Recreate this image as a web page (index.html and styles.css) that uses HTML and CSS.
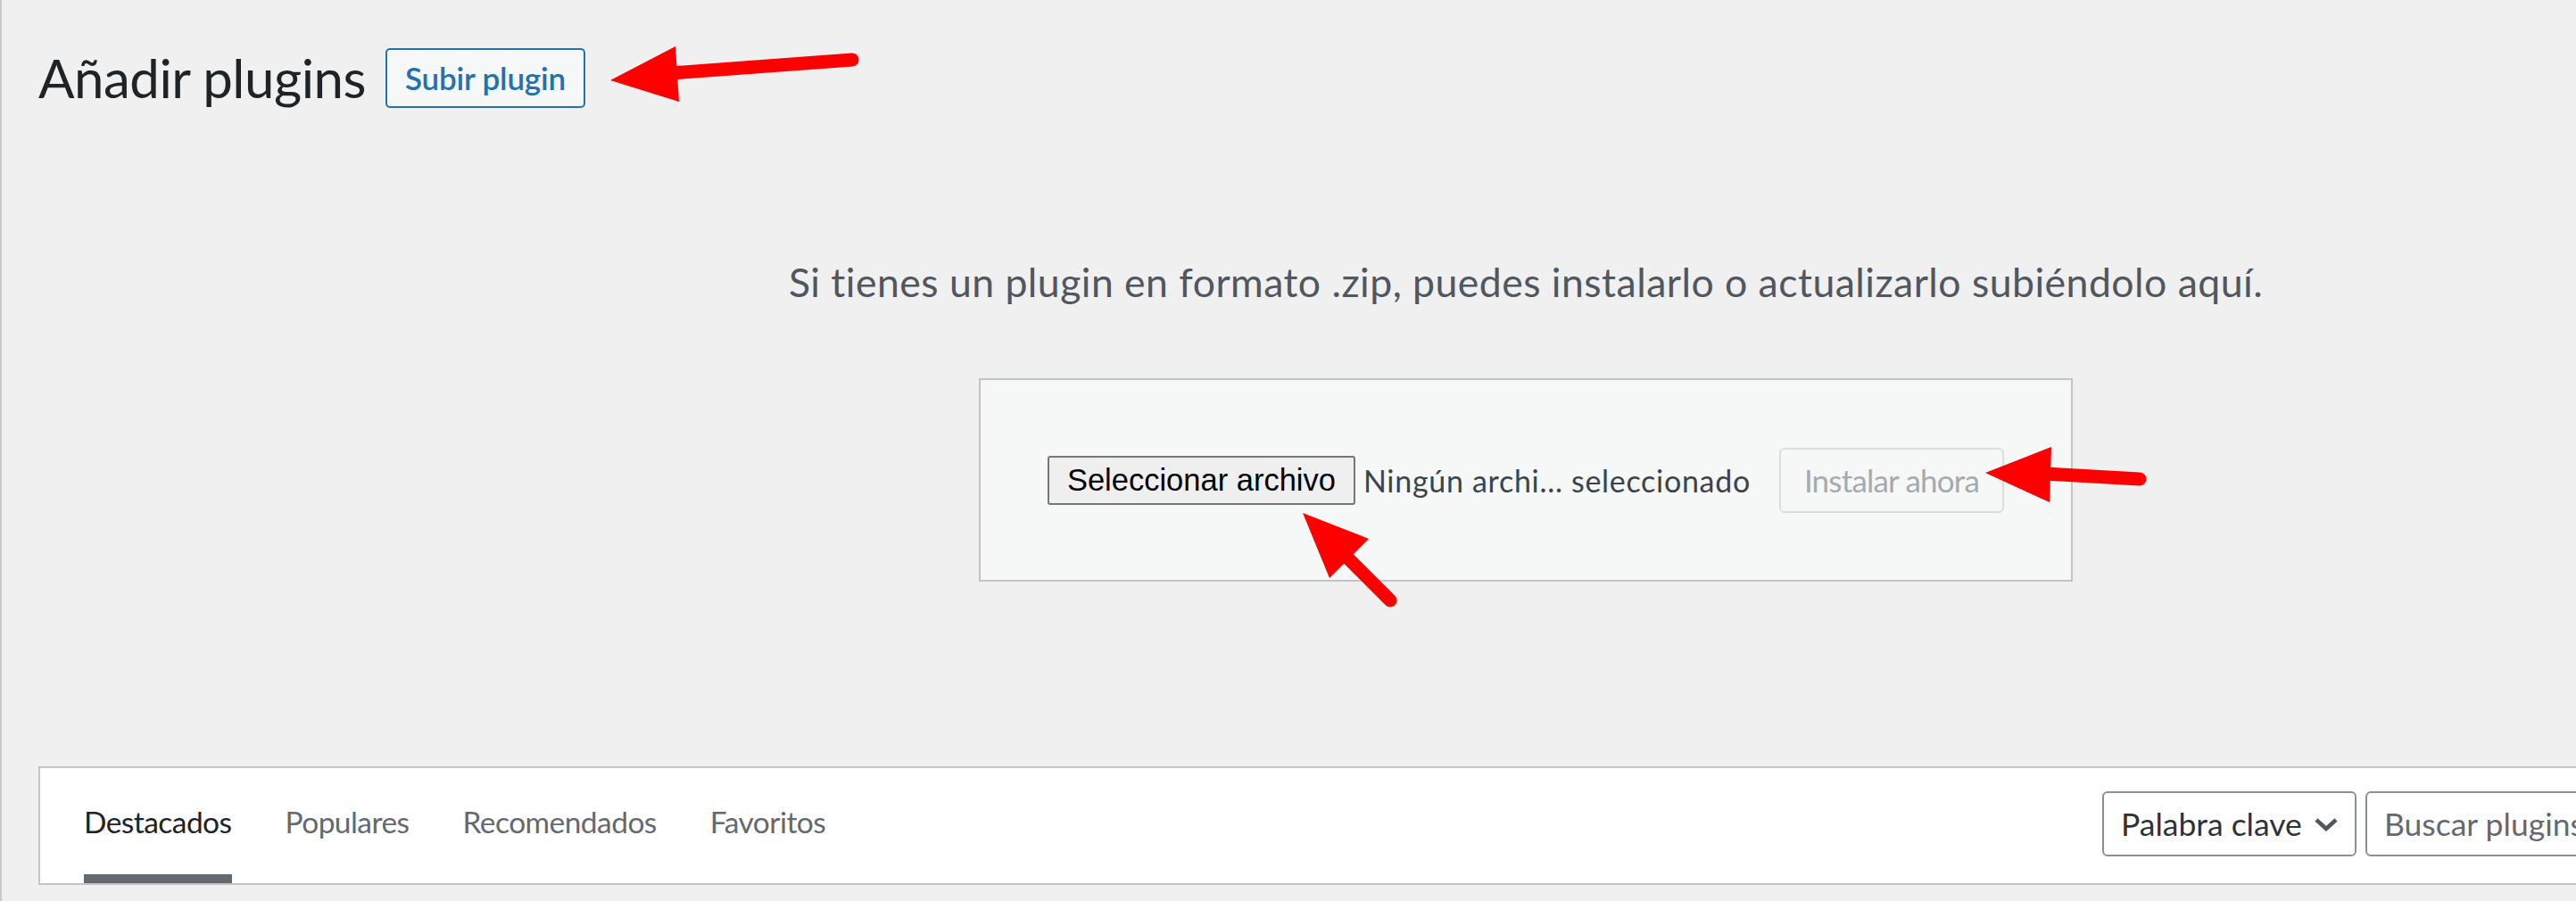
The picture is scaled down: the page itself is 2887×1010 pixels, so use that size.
FILE: index.html
```html
<!DOCTYPE html>
<html lang="es">
<head>
    <meta charset="UTF-8" />
    <meta name="viewport" content="width=device-width, initial-scale=1.0" />
    <title>Añadir plugins</title>
    <link rel="stylesheet" href="styles.css">
</head>
<body>
    <div class="wrap">
        <div class="page-header">
            <h1>Añadir plugins</h1>
            <button class="title-action">Subir plugin</button>
        </div>

        <div class="upload-plugin">
            <p class="install-help">Si tienes un plugin en formato .zip, puedes instalarlo o actualizarlo subiéndolo aquí.</p>
            <form class="upload-form">
                <button type="button" class="file-btn">Seleccionar archivo</button>
                <span class="file-name">Ningún archi... seleccionado</span>
                <button type="button" class="install-btn" disabled>Instalar ahora</button>
            </form>
        </div>

        <div class="filter-bar">
            <ul class="filter-links">
                <li><a href="#" class="current">Destacados</a></li>
                <li><a href="#">Populares</a></li>
                <li><a href="#">Recomendados</a></li>
                <li><a href="#">Favoritos</a></li>
            </ul>
            <div class="search-form">
                <div class="search-type">
                    <span>Palabra clave</span>
                    <svg class="chevron" width="28" height="16" viewBox="0 0 28 16">
                        <polyline points="3,3 14,13 25,3" fill="none" stroke="#50575e" stroke-width="4.5" />
                    </svg>
                </div>
                <input class="search-input" type="search" placeholder="Buscar plugins...">
            </div>
        </div>
    </div>

    <!-- annotation arrows -->
    <svg class="arrows" width="2887" height="1010" viewBox="0 0 2887 1010">
        <g fill="#ff0000" stroke="#ff0000" stroke-linecap="round">
            <line x1="750" y1="82" x2="953" y2="67" stroke-width="15" />
            <polygon points="682,90 755,52 759,114" stroke="none" />

            <line x1="1505" y1="622" x2="1556" y2="673" stroke-width="15" />
            <polygon points="1458,575 1532,604 1488,648" stroke="none" />

            <line x1="2290" y1="531" x2="2396" y2="537" stroke-width="15" />
            <polygon points="2223,530 2297,501 2295,563" stroke="none" />
        </g>
    </svg>
</body>
</html>
```

FILE: styles.css
```css
html,
body {
    overflow: hidden;
}

body {
    margin: 0;
    height: 1010px;
    position: relative;
    background: #f0f0f1;
    border-left: 2px solid #c8c9cc;
    font-family: "Lato", "Segoe UI", sans-serif;
    color: #1d2327;
}

.wrap {
    width: 3334px;
    margin-left: 41px;
}

.page-header {
    display: flex;
    align-items: center;
    gap: 22px;
    margin-top: 51px;
}

h1 {
    margin: 0;
    font-size: 60px;
    font-weight: 400;
    line-height: 72px;
    letter-spacing: -0.5px;
    color: #1d2327;
}

.title-action {
    height: 67px;
    padding: 0 20px;
    border: 2px solid #2271b1;
    border-radius: 5px;
    background: #f6f7f7;
    color: #2271b1;
    font-family: inherit;
    font-size: 35px;
    font-weight: 600;
    letter-spacing: -0.2px;
}

.install-help {
    margin: 166px 0 81px;
    text-align: center;
    font-size: 44.6px;
    line-height: 54px;
    letter-spacing: 0.45px;
    color: #50575e;
}

.upload-form {
    width: 1226px;
    height: 228px;
    box-sizing: border-box;
    margin: 0 auto;
    border: 2px solid #c3c4c7;
    background: #f6f7f7;
    display: flex;
    align-items: center;
    justify-content: center;
}

.file-btn {
    height: 55px;
    padding: 0 20px;
    border: 2px solid #767676;
    border-radius: 3px;
    background: #efefef;
    color: #000;
    font-family: "Liberation Sans", Arial, sans-serif;
    font-size: 34.5px;
}

.file-name {
    margin-left: 9px;
    font-size: 34px;
    letter-spacing: 0.7px;
    color: #3c434a;
}

.install-btn {
    margin-left: 32px;
    height: 73px;
    padding: 0 26px;
    border: 2px solid #dcdcde;
    border-radius: 6px;
    background: #f6f7f7;
    color: #a7aaad;
    font-family: inherit;
    font-size: 35px;
    letter-spacing: -0.8px;
}

.filter-bar {
    margin-top: 207px;
    height: 133px;
    box-sizing: border-box;
    border: 2px solid #c3c4c7;
    background: #fff;
    display: flex;
    justify-content: space-between;
    padding: 0 44px 0 49px;
}

.filter-links {
    list-style: none;
    margin: 0;
    padding: 0;
    display: flex;
    align-self: flex-end;
    gap: 60px;
}

.filter-links a {
    display: block;
    font-size: 33.5px;
    line-height: 40px;
    letter-spacing: -0.55px;
    padding-bottom: 39px;
    border-bottom: 10px solid transparent;
    color: #646970;
    text-decoration: none;
}

.filter-links a.current {
    color: #1d2327;
    border-bottom-color: #646970;
}

.search-form {
    display: flex;
    gap: 10px;
    margin-top: 26px;
    align-self: flex-start;
}

.search-type {
    width: 285px;
    height: 73px;
    box-sizing: border-box;
    border: 2px solid #8c8f94;
    border-radius: 6px;
    padding: 0 18px 0 19px;
    display: flex;
    align-items: center;
    justify-content: space-between;
    font-size: 35.5px;
    color: #2c3338;
}

.search-input {
    width: 680px;
    height: 73px;
    box-sizing: border-box;
    border: 2px solid #8c8f94;
    border-radius: 6px;
    padding: 0 19px;
    background: #fff;
    font-family: inherit;
    font-size: 35.5px;
    color: #2c3338;
}

.search-input::placeholder {
    color: #646970;
}

.arrows {
    position: absolute;
    top: 0;
    left: 0;
    pointer-events: none;
}
```
